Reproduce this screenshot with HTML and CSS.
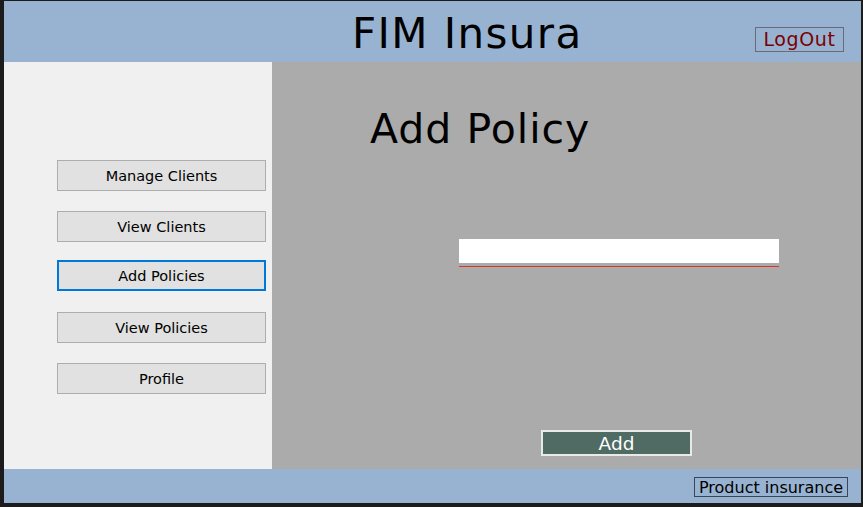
FILE: index.html
```html
<!DOCTYPE html>
<html>
<head>
<meta charset="utf-8">
<link rel="stylesheet" href="styles.css">
</head>
<body>
<div class="window">
  <header class="header">
    <div class="title">FIM Insura</div>
    <div class="logout">LogOut</div>
  </header>
  <div class="middle">
    <nav class="sidebar">
      <div class="navbtn">Manage Clients</div>
      <div class="navbtn">View Clients</div>
      <div class="navbtn active">Add Policies</div>
      <div class="navbtn">View Policies</div>
      <div class="navbtn">Profile</div>
    </nav>
    <main class="main">
      <h1 class="page-title">Add Policy</h1>
      <div class="field">
        <div class="input"></div>
        <div class="underline"></div>
      </div>
      <div class="addbtn">Add</div>
    </main>
  </div>
  <footer class="footer">
    <div class="product">Product insurance</div>
  </footer>
</div>
</body>
</html>
```
FILE: styles.css
```css
html, body {
  margin: 0;
  padding: 0;
  background: #1c1c1c;
  width: 863px;
  height: 507px;
  overflow: hidden;
  font-family: "DejaVu Sans", sans-serif;
}
.window {
  width: 857px;
  height: 502px;
  margin: 1px 0 0 4px;
  display: flex;
  flex-direction: column;
}
.header {
  height: 61px;
  background: #98b3d1;
  display: flex;
  align-items: flex-start;
  flex: none;
}
.title {
  margin-left: 348px;
  margin-top: 8px;
  font-size: 42px;
  line-height: 50px;
  letter-spacing: 1.4px;
  color: #000;
}
.logout {
  margin-left: auto;
  margin-right: 17px;
  margin-top: 26px;
  width: 87px;
  height: 23px;
  border: 1px solid #6b6b78;
  color: #7a0000;
  font-size: 19px;
  line-height: 23px;
  letter-spacing: 0.6px;
  text-align: center;
}
.middle {
  display: flex;
  height: 407px;
  flex: none;
}
.sidebar {
  width: 268px;
  background: #f0f0f0;
  display: flex;
  flex-direction: column;
  padding-top: 98px;
  padding-left: 53px;
  box-sizing: border-box;
  gap: 20px;
}
.navbtn {
  width: 207px;
  height: 29px;
  border: 1px solid #adadad;
  background: #e1e1e1;
  font-size: 14.5px;
  line-height: 30px;
  text-align: center;
  color: #000;
}
.navbtn.active {
  width: 205px;
  height: 27px;
  line-height: 28px;
  border: 2px solid #0078d7;
  margin-top: -2px;
  margin-bottom: 1px;
}
.main {
  flex: 1;
  background: #ababab;
  display: flex;
  flex-direction: column;
  align-items: flex-start;
}
.page-title {
  margin: 43px 0 0 98px;
  font-weight: normal;
  font-size: 41px;
  line-height: 48px;
  letter-spacing: 1px;
  color: #000;
}
.field {
  margin: 86px 0 0 187px;
}
.input {
  width: 320px;
  height: 24px;
  background: #fff;
}
.underline {
  margin-top: 3px;
  width: 320px;
  height: 1px;
  background: #d8372c;
}
.addbtn {
  margin: auto 0 13px 269px;
  width: 147px;
  height: 22px;
  border: 2px solid #e6ebe6;
  background: #4f6b63;
  color: #fff;
  font-size: 18.5px;
  line-height: 23px;
  text-align: center;
}
.footer {
  height: 34px;
  background: #98b3d1;
  display: flex;
  justify-content: flex-end;
  flex: none;
}
.product {
  margin-top: 8px;
  margin-right: 13px;
  width: 152px;
  height: 18px;
  border: 1px solid #3a4656;
  font-size: 16px;
  line-height: 19px;
  color: #000;
  text-align: center;
}
```
